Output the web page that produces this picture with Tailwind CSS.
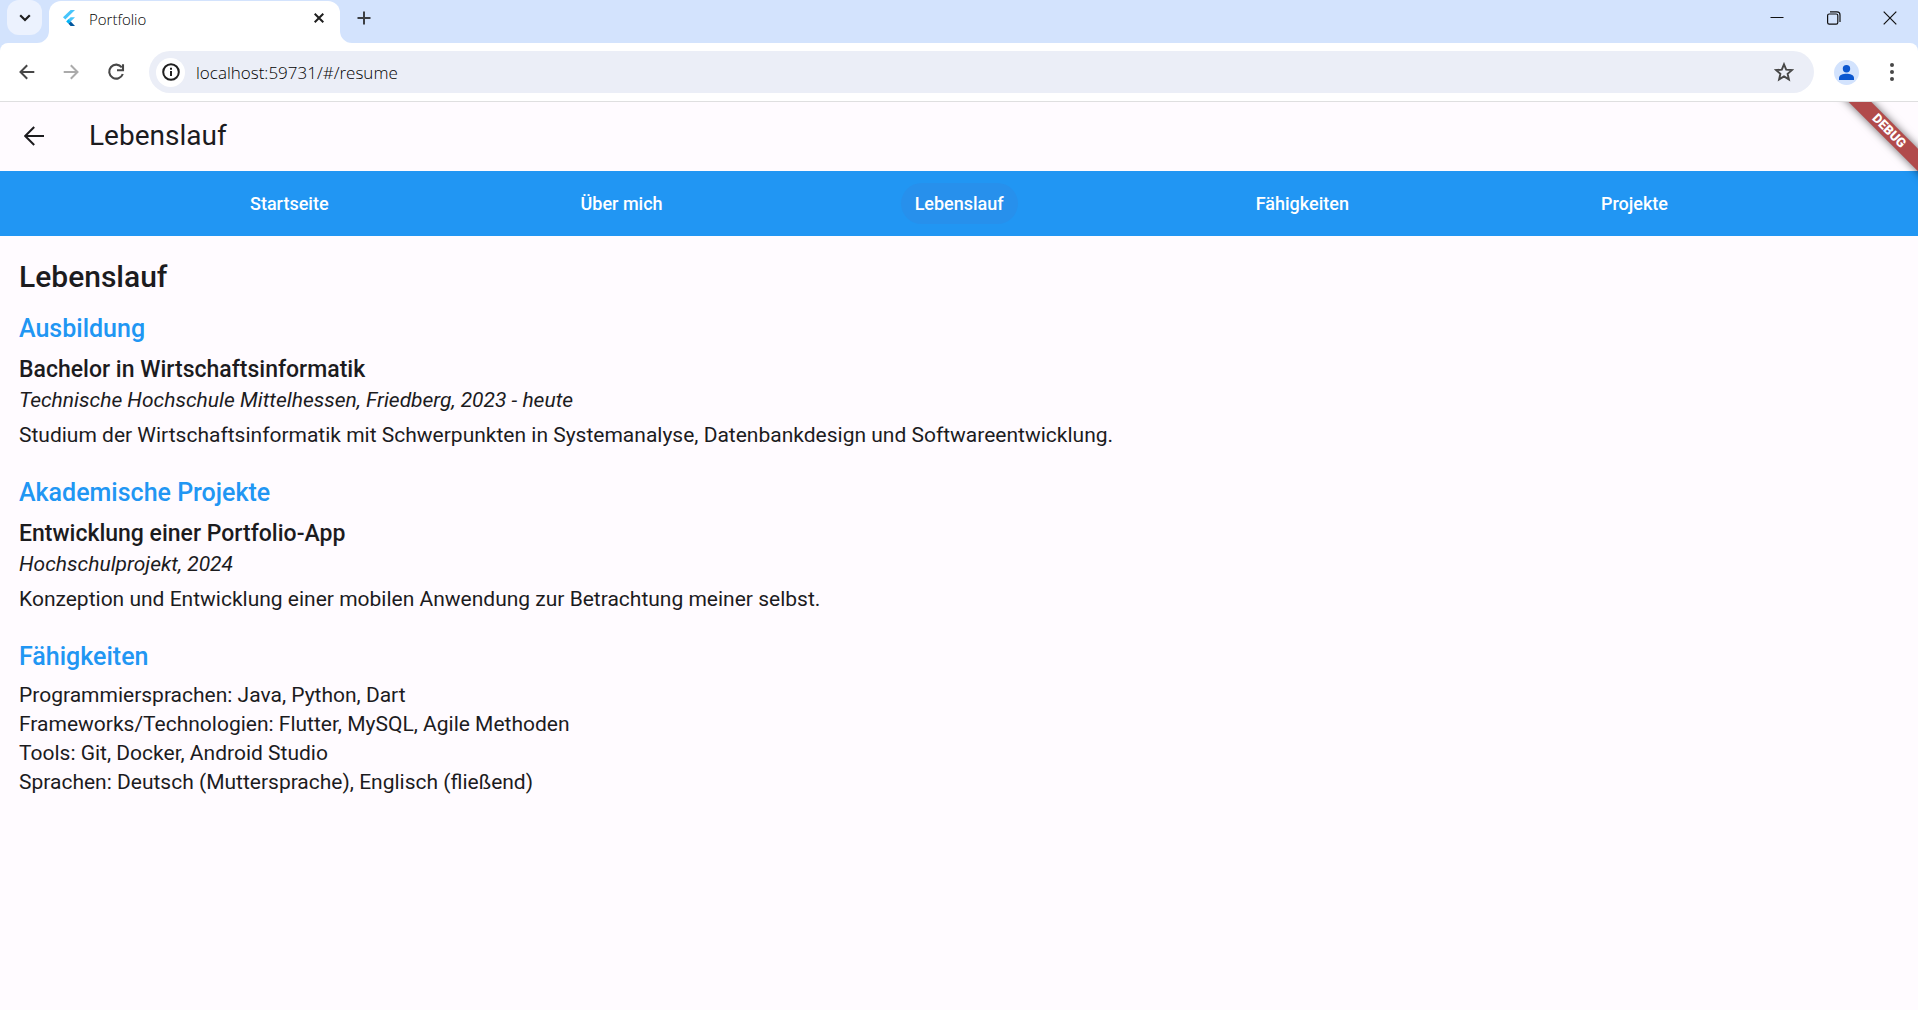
<!DOCTYPE html>
<html lang="de">
<head>
<meta charset="utf-8">
<title>Portfolio</title>
<meta name="viewport" content="width=device-width, initial-scale=1">
<script src="https://cdn.jsdelivr.net/npm/@tailwindcss/browser@4"></script>
</head>
<body class="min-h-screen bg-[#fffbff] text-[#1c1b1e] font-['Roboto',sans-serif]">

<!-- Browser window -->
<div class="bg-[#d3e3fd] font-['Open_Sans',sans-serif]">
  <div class="flex h-[43px] items-start">
    <button aria-label="Tabs durchsuchen" class="ml-[7px] flex size-[35px] shrink-0 items-center justify-center rounded-xl bg-[#ecf2fe]">
      <svg width="12" height="8" viewBox="0 0 12 8" fill="none" stroke="#1f1f1f" stroke-width="2.2"><path d="M1.2 1.2 6 6l4.8-4.8"/></svg>
    </button>
    <div class="relative ml-[7px] mt-px flex h-[42px] w-[291px] items-start rounded-t-xl bg-white pt-2 pl-[14px] pr-[14px]">
      <svg class="absolute bottom-0 -left-3" width="12" height="12"><path d="M12 0v12H0A12 12 0 0 0 12 0z" fill="#fff"/></svg>
      <svg class="absolute bottom-0 -right-3" width="12" height="12"><path d="M0 0v12h12A12 12 0 0 1 0 0z" fill="#fff"/></svg>
      <svg class="mt-px" width="12" height="16" viewBox="0 0 12 16">
        <path d="M7.6 0H12L2.3 9.4 0 7.2z" fill="#47c5fb"/>
        <path d="M7.6 7.2H12L7.7 11.4 5.5 9.2z" fill="#47c5fb"/>
        <path d="M3.2 11.4 5.5 9.1l2.3 2.3-2.3 2.3z" fill="#00b5f8"/>
        <path d="M5.5 13.7 7.8 11.4 12 16H7.6z" fill="#00569e"/>
      </svg>
      <span class="ml-[14px] flex-1 text-[15px] leading-5 font-light text-black">Portfolio</span>
      <button aria-label="Tab schließen" class="mt-[2px] flex size-[14px] items-center justify-center">
        <svg width="10" height="10" viewBox="0 0 10 10" stroke="#1f1f1f" stroke-width="2"><path d="m.7.7 8.6 8.6M9.3.7.7 9.3"/></svg>
      </button>
    </div>
    <button aria-label="Neuer Tab" class="ml-[6px] flex size-9 items-center justify-center">
      <svg width="14" height="14" viewBox="0 0 14 14" stroke="#3c3f43" stroke-width="2"><path d="M7 .5v13M.5 7h13"/></svg>
    </button>
    <div class="ml-auto flex">
      <button aria-label="Minimieren" class="flex h-[35px] w-[57px] items-center justify-center"><svg width="14" height="14" viewBox="0 0 14 14" stroke="#111"><path d="M.5 6.5h13"/></svg></button>
      <button aria-label="Verkleinern" class="flex h-[35px] w-[57px] items-center justify-center"><svg width="14" height="14" viewBox="0 0 14 14" stroke="#111" stroke-width="1.2" fill="none"><rect x=".6" y="3" width="10.2" height="10.2" rx="1.6"/><path d="M3 .9h7a3 3 0 0 1 3 3v7"/></svg></button>
      <button aria-label="Schließen" class="flex h-[35px] w-14 items-center justify-center"><svg width="14" height="14" viewBox="0 0 14 14" stroke="#111" stroke-width="1.2"><path d="m.7.7 12.6 12.6M13.3.7.7 13.3"/></svg></button>
    </div>
  </div>

  <div class="flex h-[59px] items-center rounded-t-lg border-b border-[#dfdfe0] bg-white pl-[19px] pr-[14px]">
    <div class="flex items-center gap-7">
      <button aria-label="Zurück"><svg width="16" height="16" viewBox="0 0 16 16" fill="none" stroke="#474747" stroke-width="2"><path d="M15.3 8H2M8.2 1.3 1.5 8l6.7 6.7"/></svg></button>
      <button aria-label="Vorwärts" disabled><svg width="16" height="16" viewBox="0 0 16 16" fill="none" stroke="#ababab" stroke-width="2"><path d="M.7 8H14M7.8 1.3 14.5 8l-6.7 6.7"/></svg></button>
      <button aria-label="Neu laden"><svg width="18" height="18" viewBox="0 0 18 18" fill="none" stroke="#474747" stroke-width="2.1"><path d="M14.8 4.4A7 7 0 1 0 15.8 11"/><path d="M16 1.2v6H10"/></svg></button>
    </div>
    <div class="ml-6 flex h-[42px] flex-1 items-center rounded-full bg-[#ebeef7] pl-[7px] pr-5">
      <button aria-label="Website-Informationen" class="flex size-[29px] items-center justify-center rounded-full bg-white">
        <svg width="18" height="18" viewBox="0 0 18 18" fill="none" stroke="#1f1f1f" stroke-width="2"><circle cx="9" cy="9" r="7.8"/><path d="M9 8v5M9 4.8v2"/></svg>
      </button>
      <input aria-label="Adresse" type="text" value="localhost:59731/#/resume" class="ml-[11px] h-8 min-w-0 flex-1 bg-transparent text-[17px] font-light text-black outline-none">
      <button aria-label="Lesezeichen hinzufügen"><svg width="20" height="20" viewBox="0 0 20 20" fill="none" stroke="#474747" stroke-width="1.9"><path d="m10 2.3 2.2 5.3 5.7.5-4.3 3.7 1.3 5.6-4.9-3-4.9 3 1.3-5.6L2.1 8.1l5.7-.5z"/></svg></button>
    </div>
    <button aria-label="Profil" class="ml-5 flex size-[25px] items-center justify-center rounded-full bg-[#d3e3fd]">
      <svg width="15" height="15" viewBox="0 0 15 15" fill="#0b57d0"><circle cx="7.5" cy="3.7" r="3.7"/><path d="M0 15v-2c0-3 4-4.2 7.5-4.2S15 10 15 13v2z"/></svg>
    </button>
    <button aria-label="Menü" class="ml-5 flex w-[25px] justify-center"><svg width="4" height="18" viewBox="0 0 4 18" fill="#474747"><circle cx="2" cy="2" r="2"/><circle cx="2" cy="9" r="2"/><circle cx="2" cy="16" r="2"/></svg></button>
  </div>
</div>

<!-- App -->
<div class="relative">
  <header class="flex h-[69px] items-center pb-[2px] pl-6">
    <button aria-label="Zurück"><svg width="20" height="20" viewBox="0 0 20 20" fill="none" stroke="#1c1b1e" stroke-width="2"><path d="M20 10H2M10.2 1 1.2 10l9 9"/></svg></button>
    <div class="ml-[45px] text-[28px] leading-9">Lebenslauf</div>
  </header>

  <nav class="flex items-center justify-evenly bg-[#2196f3] px-3 py-3 text-[18px] leading-[41px] font-medium text-white">
    <a href="#/" class="rounded-full px-[14px]">Startseite</a>
    <a href="#/about" class="rounded-full px-[14px]">Über mich</a>
    <a href="#/resume" aria-current="page" class="rounded-full bg-[#2790ec] px-[14px]">Lebenslauf</a>
    <a href="#/skills" class="rounded-full px-[14px]">Fähigkeiten</a>
    <a href="#/projects" class="rounded-full px-[14px]">Projekte</a>
  </nav>

  <main class="px-[19px] pt-[21px] pb-5 text-[21px] leading-[30px]">
    <h1 class="text-[30px] leading-10 font-medium">Lebenslauf</h1>

    <section class="mt-[14px]">
      <h2 class="text-[25px] leading-[35px] font-medium text-[#2196f3]">Ausbildung</h2>
      <h3 class="mt-[9px] text-[23px] font-medium">Bachelor in Wirtschaftsinformatik</h3>
      <p class="italic">Technische Hochschule Mittelhessen, Friedberg, 2023 - heute</p>
      <p class="mt-[5px]">Studium der Wirtschaftsinformatik mit Schwerpunkten in Systemanalyse, Datenbankdesign und Softwareentwicklung.</p>
    </section>

    <section class="mt-[25px]">
      <h2 class="text-[25px] leading-[35px] font-medium text-[#2196f3]">Akademische Projekte</h2>
      <h3 class="mt-[9px] text-[23px] font-medium">Entwicklung einer Portfolio-App</h3>
      <p class="italic">Hochschulprojekt, 2024</p>
      <p class="mt-[5px]">Konzeption und Entwicklung einer mobilen Anwendung zur Betrachtung meiner selbst.</p>
    </section>

    <section class="mt-[25px]">
      <h2 class="text-[25px] leading-[35px] font-medium text-[#2196f3]">Fähigkeiten</h2>
      <ul class="mt-[7px] leading-[29px]">
        <li>Programmiersprachen: Java, Python, Dart</li>
        <li>Frameworks/Technologien: Flutter, MySQL, Agile Methoden</li>
        <li>Tools: Git, Docker, Android Studio</li>
        <li>Sprachen: Deutsch (Muttersprache), Englisch (fließend)</li>
      </ul>
    </section>
  </main>

  <!-- Debug ribbon -->
  <div class="pointer-events-none absolute top-0 right-0 size-[88px] overflow-hidden">
    <div class="absolute top-[21px] -left-[11px] h-4 w-[140px] rotate-45 bg-[#b14a4b] text-center text-[13px] leading-4 font-black text-white shadow-[0_0_8px_rgba(0,0,0,0.6)]">DEBUG</div>
  </div>
</div>
</body>
</html>
